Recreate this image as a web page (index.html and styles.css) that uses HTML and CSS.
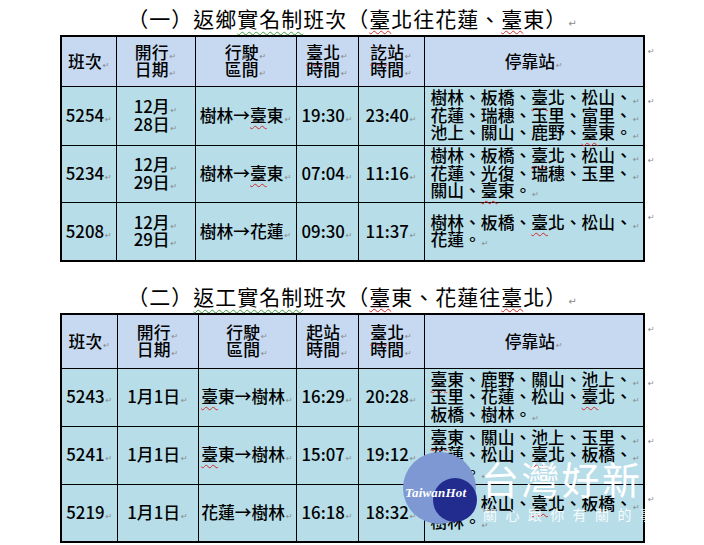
FILE: index.html
```html
<!DOCTYPE html>
<html lang="zh-Hant">
<head>
<meta charset="utf-8">
<title>實名制班次</title>
<link rel="stylesheet" href="styles.css">
</head>
<body>
<div class="page">
  <h2 class="title t1">（一）返鄉<span class="gr">實名制</span>班次（<span class="sp">臺</span>北往花蓮、<span class="sp">臺</span>東）<span class="pm">↵</span></h2>
  <table class="sched s1">
    <colgroup><col class="c1"><col class="c2"><col class="c3"><col class="c4"><col class="c5"><col class="c6"><col class="c7"></colgroup>
    <tr class="hd r-h1">
      <th>班次<span class="pm">↵</span></th>
      <th>開行<span class="pm">↵</span><br>日期<span class="pm">↵</span></th>
      <th>行駛<span class="pm">↵</span><br>區間<span class="pm">↵</span></th>
      <th><span class="sp">臺</span>北<span class="pm">↵</span><br>時間<span class="pm">↵</span></th>
      <th><span class="sp">訖</span>站<span class="pm">↵</span><br>時間<span class="pm">↵</span></th>
      <th>停靠站<span class="pm">↵</span></th>
      <td class="end"><span class="pm">↵</span></td>
    </tr>
    <tr class="r59">
      <td>5254<span class="pm">↵</span></td>
      <td>12月<span class="pm">↵</span><br>28日<span class="pm">↵</span></td>
      <td>樹林→<span class="sp">臺</span>東<span class="pm">↵</span></td>
      <td>19:30<span class="pm">↵</span></td>
      <td>23:40<span class="pm">↵</span></td>
      <td class="st">樹林、板橋、<span class="sp">臺</span>北、松山、<span class="pm">↵</span><br>花蓮、瑞穗、玉里、富里、<span class="pm">↵</span><br>池上、關山、鹿野、<span class="sp">臺</span>東。<span class="pm">↵</span></td>
      <td class="end"><span class="pm">↵</span></td>
    </tr>
    <tr class="r57">
      <td>5234<span class="pm">↵</span></td>
      <td>12月<span class="pm">↵</span><br>29日<span class="pm">↵</span></td>
      <td>樹林→<span class="sp">臺</span>東<span class="pm">↵</span></td>
      <td>07:04<span class="pm">↵</span></td>
      <td>11:16<span class="pm">↵</span></td>
      <td class="st">樹林、板橋、<span class="sp">臺</span>北、松山、<span class="pm">↵</span><br>花蓮、光復、瑞穗、玉里、<span class="pm">↵</span><br>關山、<span class="sp">臺</span>東。<span class="pm">↵</span></td>
      <td class="end"><span class="pm">↵</span></td>
    </tr>
    <tr class="r59">
      <td>5208<span class="pm">↵</span></td>
      <td>12月<span class="pm">↵</span><br>29日<span class="pm">↵</span></td>
      <td>樹林→花蓮<span class="pm">↵</span></td>
      <td>09:30<span class="pm">↵</span></td>
      <td>11:37<span class="pm">↵</span></td>
      <td class="st">樹林、板橋、<span class="sp">臺</span>北、松山、<span class="pm">↵</span><br>花蓮。<span class="pm">↵</span></td>
      <td class="end"><span class="pm">↵</span></td>
    </tr>
  </table>

  <h2 class="title t2">（二）<span class="gr">返工實名制</span>班次（<span class="sp">臺</span>東、花蓮往<span class="sp">臺</span>北）<span class="pm">↵</span></h2>
  <table class="sched s2">
    <colgroup><col class="c1"><col class="c2"><col class="c3"><col class="c4"><col class="c5"><col class="c6"><col class="c7"></colgroup>
    <tr class="hd r-h2">
      <th>班次<span class="pm">↵</span></th>
      <th>開行<span class="pm">↵</span><br>日期<span class="pm">↵</span></th>
      <th>行駛<span class="pm">↵</span><br>區間<span class="pm">↵</span></th>
      <th>起站<span class="pm">↵</span><br>時間<span class="pm">↵</span></th>
      <th><span class="sp">臺</span>北<span class="pm">↵</span><br>時間<span class="pm">↵</span></th>
      <th>停靠站<span class="pm">↵</span></th>
      <td class="end"><span class="pm">↵</span></td>
    </tr>
    <tr class="r58">
      <td>5243<span class="pm">↵</span></td>
      <td>1月1日<span class="pm">↵</span></td>
      <td><span class="sp">臺</span>東→樹林<span class="pm">↵</span></td>
      <td>16:29<span class="pm">↵</span></td>
      <td>20:28<span class="pm">↵</span></td>
      <td class="st"><span class="sp">臺</span>東、鹿野、關山、池上、<span class="pm">↵</span><br>玉里、花蓮、松山、<span class="sp">臺</span>北、<span class="pm">↵</span><br>板橋、樹林。<span class="pm">↵</span></td>
      <td class="end"><span class="pm">↵</span></td>
    </tr>
    <tr class="r58">
      <td>5241<span class="pm">↵</span></td>
      <td>1月1日<span class="pm">↵</span></td>
      <td><span class="sp">臺</span>東→樹林<span class="pm">↵</span></td>
      <td>15:07<span class="pm">↵</span></td>
      <td>19:12<span class="pm">↵</span></td>
      <td class="st"><span class="sp">臺</span>東、關山、池上、玉里、<span class="pm">↵</span><br>花蓮、松山、<span class="sp">臺</span>北、板橋、<span class="pm">↵</span><br>樹林。<span class="pm">↵</span></td>
      <td class="end"><span class="pm">↵</span></td>
    </tr>
    <tr class="r58">
      <td>5219<span class="pm">↵</span></td>
      <td>1月1日<span class="pm">↵</span></td>
      <td>花蓮→樹林<span class="pm">↵</span></td>
      <td>16:18<span class="pm">↵</span></td>
      <td>18:32<span class="pm">↵</span></td>
      <td class="st">花蓮、松山、<span class="sp">臺</span>北、板橋、<span class="pm">↵</span><br>樹林。<span class="pm">↵</span></td>
      <td class="end"><span class="pm">↵</span></td>
    </tr>
  </table>

  <div class="wm">
    <div class="wm-c1"></div>
    <div class="wm-c2"></div>
    <span class="wm-logo">TaiwanHot</span>
    <div class="wm-big">台灣好新聞</div>
    <div class="wm-sub">關心跟你有關的事</div>
  </div>
</div>
</body>
</html>
```

FILE: styles.css
```css
* { box-sizing: border-box; }
html, body { margin: 0; padding: 0; background: #fff; }
body {
  font-family: "Noto Sans CJK TC", "Noto Sans", sans-serif;
  color: #000;
}
.page {
  position: relative;
  width: 704px;
  height: 545px;
  overflow: hidden;
}

.title {
  margin: 3px 0 2px;
  height: 30px;
  font-size: 21px;
  font-weight: 400;
  line-height: 30px;
  letter-spacing: 1px;
  text-align: center;
  white-space: nowrap;
}
.t2 { margin-top: 19px; }
.title .pm { font-size: 10px; letter-spacing: 0; }

.sp {
  text-decoration: underline wavy #d42a2a;
  text-decoration-thickness: 1px;
  text-underline-offset: 3px;
}
.gr {
  text-decoration: underline wavy #3f9f3f;
  text-decoration-thickness: 1px;
  text-underline-offset: 4px;
}
.pm {
  font-family: "DejaVu Sans", sans-serif;
  font-size: 8px;
  line-height: 0;
  color: #8a8a8a;
  font-weight: normal;
  letter-spacing: 0;
  margin-left: 1px;
  vertical-align: baseline;
}

.sched {
  margin-left: 60px;
  border-collapse: collapse;
  table-layout: fixed;
  width: 612px;
  font-size: 16.8px;
  line-height: 17.5px;
}
.sched th, .sched td {
  border: 1px solid #000;
  padding: 0;
  text-align: center;
  vertical-align: middle;
  font-weight: 500;
  white-space: nowrap;
  background: #b6dde8;
}
.sched .hd th { background: #c6d9f1; }
.sched tr > *:first-child { border-left-width: 2px; }
.sched tr > *:nth-child(6) { border-right-width: 2px; }
.sched tr:first-child > * { border-top-width: 2px; }
.sched tr:last-child > * { border-bottom-width: 2px; }
.sched tr > td.end {
  border-top: none;
  border-bottom: none;
  border-right: none;
  background: transparent;
  vertical-align: top;
  text-align: left;
  padding: 6px 0 0 2px;
  line-height: 10px;
}
.sched td.st {
  text-align: left;
  padding-left: 6px;
  letter-spacing: 0;
}

.s1 .c1 { width: 55px; }
.s1 .c2 { width: 79px; }
.s1 .c3 { width: 101px; }
.s1 .c4 { width: 62px; }
.s1 .c5 { width: 66px; }
.s1 .c6 { width: 220px; }
.s1 .c7 { width: 29px; }

.s2 .c1 { width: 56px; }
.s2 .c2 { width: 81px; }
.s2 .c3 { width: 98px; }
.s2 .c4 { width: 62px; }
.s2 .c5 { width: 66px; }
.s2 .c6 { width: 220px; }
.s2 .c7 { width: 29px; }

.r-h1 { height: 50px; }
.r-h2 { height: 54px; }
.r59 { height: 59px; }
.r57 { height: 57px; }
.r58 { height: 58px; }

/* watermark overlay */
.wm-c1 {
  position: absolute;
  left: 403px;
  top: 452px;
  width: 73px;
  height: 72px;
  border-radius: 50%;
  background: #7d98d2;
}
.wm-c2 {
  position: absolute;
  left: 433px;
  top: 478px;
  width: 44px;
  height: 44px;
  border-radius: 50%;
  background: #222b8e;
}
.wm-logo {
  position: absolute;
  left: 405px;
  top: 485px;
  font-family: "Liberation Serif", serif;
  font-style: italic;
  font-weight: bold;
  font-size: 13px;
  line-height: 16px;
  color: #fff;
  letter-spacing: 0.2px;
}
.wm-big {
  position: absolute;
  left: 481px;
  top: 458px;
  font-size: 38px;
  line-height: 40px;
  font-weight: 400;
  letter-spacing: 2.3px;
  color: #fff;
  white-space: nowrap;
}
.wm-sub {
  position: absolute;
  left: 483px;
  top: 505px;
  font-size: 14px;
  line-height: 18px;
  letter-spacing: 8.4px;
  color: rgba(255, 255, 255, 0.9);
  white-space: nowrap;
}
```
